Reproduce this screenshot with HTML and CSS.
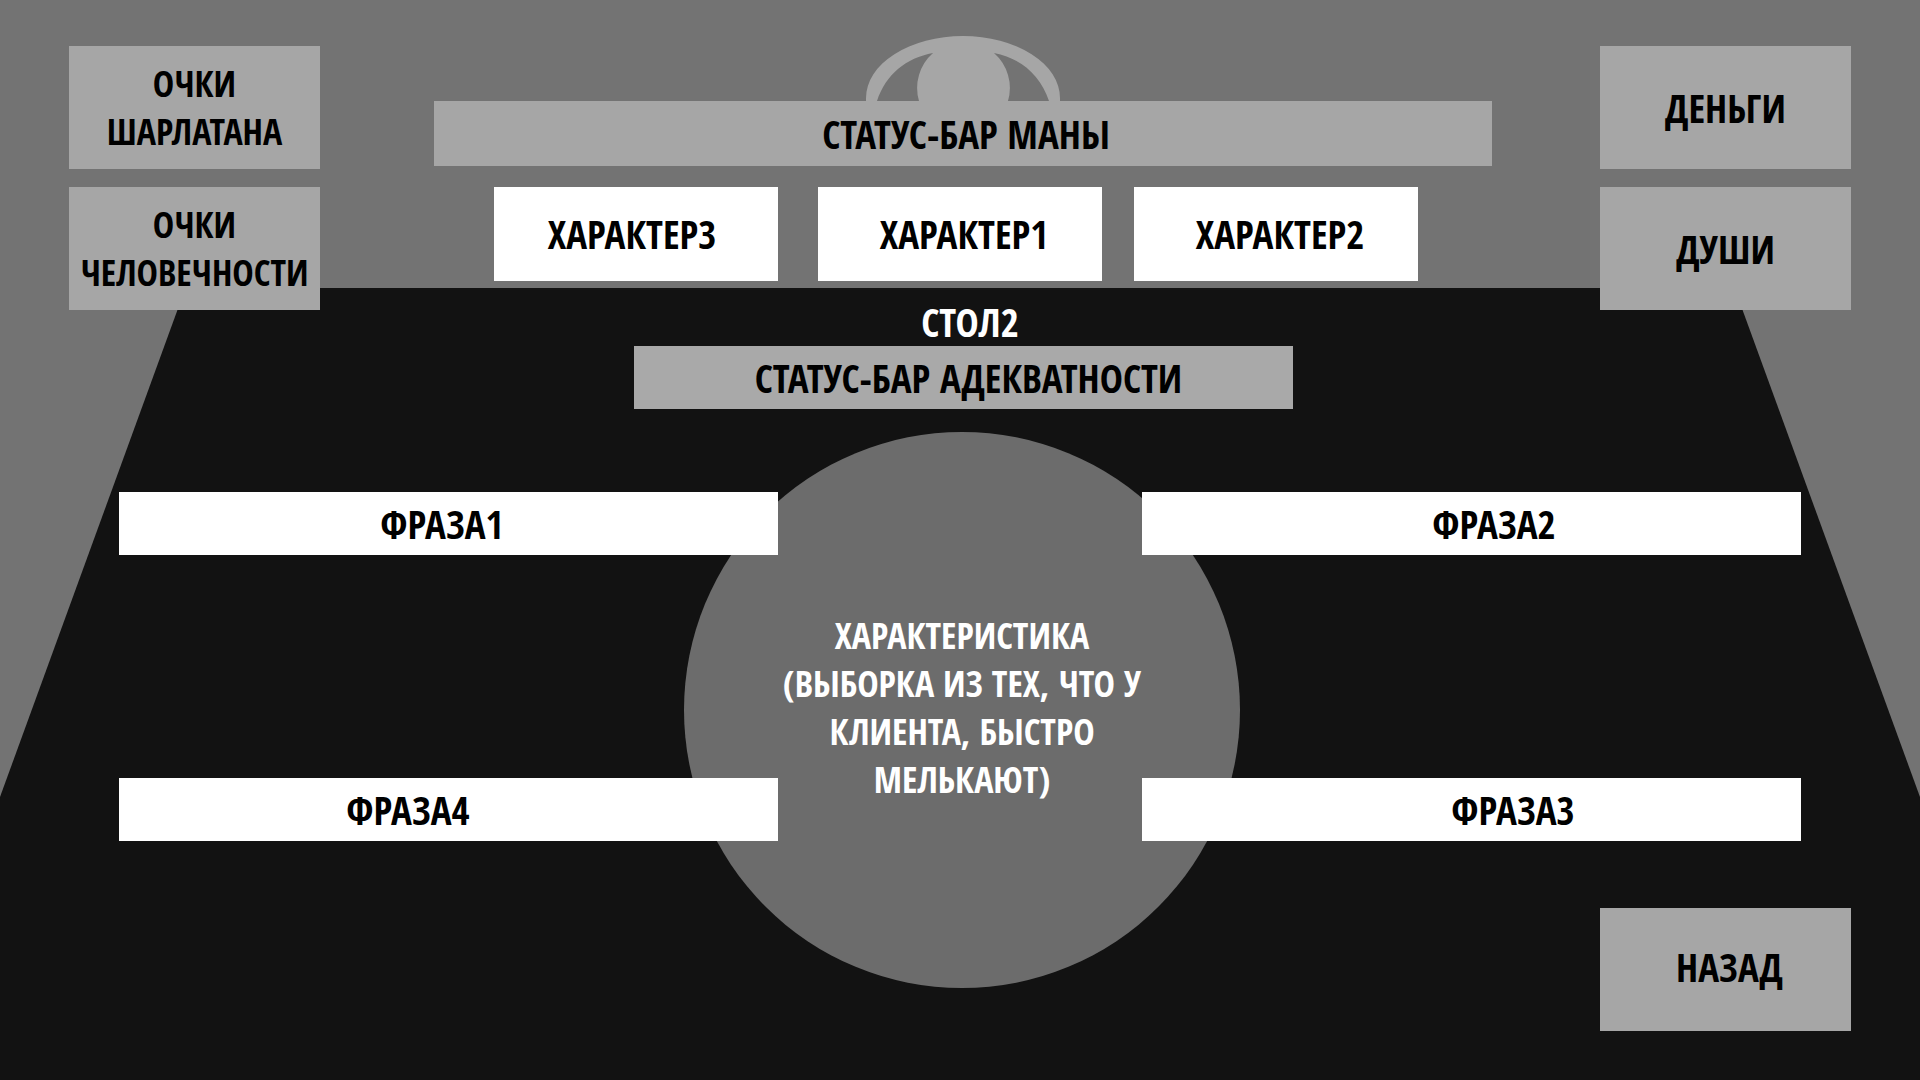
FILE: index.html
```html
<!DOCTYPE html>
<html lang="ru">
<head>
  <meta charset="utf-8">
  <meta name="viewport" content="width=device-width, initial-scale=1">
  <title>Стол</title>
  <link rel="stylesheet" href="styles.css">
</head>
<body>
  <main class="scene">
    <header class="hud">
      <div class="counters">
        <div class="counter counter-long">Очки<br>шарлатана</div>
        <div class="counter counter-long">Очки<br>человечности</div>
      </div>

      <div class="client">
        <svg class="eye" viewBox="0 0 194 65" width="194" height="65" aria-hidden="true">
          <path d="M0 65 V62 A97 62 0 0 1 194 62 V65 H183 C174 38 154 22 128 17 A46.500 46.500 0 0 1 142 65 H53 A46.500 46.500 0 0 1 67 17 C40 22 20 38 11 65 Z"/>
        </svg>
        <div class="bar mana">Статус-бар маны</div>
        <div class="traits">
          <div class="trait trait-left">Характер3</div>
          <div class="trait trait-middle">Характер1</div>
          <div class="trait trait-right">Характер2</div>
        </div>
      </div>

      <div class="counters">
        <div class="counter">Деньги</div>
        <div class="counter">Души</div>
      </div>
    </header>

    <section class="table">
      <div class="table-head">
        <h1 class="table-title">Стол2</h1>
        <div class="bar sanity">Статус-бар адекватности</div>
      </div>
      <div class="board">
        <p class="feature">Характеристика<br>(выборка из тех, что у<br>клиента, быстро<br>мелькают)</p>
        <button type="button" class="phrase phrase-1">Фраза1</button>
        <button type="button" class="phrase phrase-2">Фраза2</button>
        <button type="button" class="phrase phrase-3">Фраза3</button>
        <button type="button" class="phrase phrase-4">Фраза4</button>
        <button type="button" class="back">Назад</button>
      </div>
    </section>
  </main>
</body>
</html>
```
FILE: styles.css
```css
* {
  box-sizing: border-box;
}

body {
  margin: 0;
  background: #737373;
  color: #000;
  font-family: "Open Sans Condensed", "Open Sans", sans-serif;
  font-size: 39px;
  font-weight: 700;
  line-height: 48px;
  text-transform: uppercase;
}

button {
  border: 0;
  padding: 0;
  color: inherit;
  font: inherit;
  text-transform: inherit;
  cursor: pointer;
}

.scene {
  display: flex;
  flex-direction: column;
  min-height: 100vh;
}

/* Counters, mana and client traits */
.hud {
  position: relative;
  z-index: 1;
  display: grid;
  grid-template-columns: 251px 1fr 251px;
  padding: 36px 69px 0;
}

.counters {
  display: flex;
  flex-direction: column;
  gap: 18px;
  padding-top: 10px;
}

.counter {
  display: flex;
  align-items: center;
  justify-content: center;
  height: 123px;
  background: #a6a6a6;
  text-align: center;
}

.counter-long {
  font-size: 36px;
}

.client {
  display: flex;
  flex-direction: column;
  align-items: center;
  padding: 0 108px 0 114px;
}

.eye {
  display: block;
  fill: #a6a6a6;
}

.bar {
  display: flex;
  align-items: center;
  justify-content: center;
  background: #a6a6a6;
  white-space: nowrap;
}

.mana {
  width: 100%;
  height: 65px;
  padding-left: 6px;
}

.traits {
  display: grid;
  grid-template-columns: 284fr 40fr 284fr 32fr 284fr;
  width: 100%;
  padding: 21px 74px 0 60px;
}

.trait {
  display: flex;
  align-items: center;
  justify-content: center;
  height: 94px;
  background: #fff;
}

.trait-left {
  grid-column: 1;
  padding-right: 8px;
}

.trait-middle {
  grid-column: 3;
  padding-left: 8px;
}

.trait-right {
  grid-column: 5;
  padding-left: 8px;
}

/* The table top narrows towards the client, under the counters */
.table {
  flex: 1;
  margin-top: -22px;
  padding: 9px 0 49px;
  background: #121212;
  clip-path: polygon(9.66% 0, 90.34% 0, 100% 509px, 100% 100%, 0 100%, 0 509px);
}

.table-head {
  padding-left: 7px;
}

.table-title {
  margin: 0;
  padding-left: 13px;
  color: #fff;
  font-size: 39px;
  line-height: 49px;
  text-align: center;
}

.sanity {
  width: 34.45%;
  height: 63px;
  margin: 0 auto;
  padding-left: 10px;
  background: #a9a9a9;
}

.board {
  display: grid;
  grid-template-columns: 50fr 659fr 364fr 659fr 50fr;
  grid-template-rows: 83px 63px 223px 63px 67px 80px 43px;
  padding: 0 69px;
}

.feature {
  grid-area: 1 / 1 / 7 / 6;
  place-self: end center;
  display: flex;
  align-items: center;
  justify-content: center;
  width: 556px;
  height: 556px;
  margin: 0 0 0 4px;
  padding-bottom: 4px;
  border-radius: 50%;
  background: #6c6c6c;
  color: #fff;
  font-size: 36px;
  text-align: center;
  white-space: nowrap;
}

.phrase {
  background: #fff;
}

.phrase-1 {
  grid-area: 2 / 2;
  padding-right: 13px;
}

.phrase-2 {
  grid-area: 2 / 4;
  padding-left: 45px;
}

.phrase-3 {
  grid-area: 4 / 4;
  padding-left: 83px;
}

.phrase-4 {
  grid-area: 4 / 2;
  padding-right: 81px;
}

.back {
  grid-area: 6 / 4 / 8 / 6;
  justify-self: end;
  width: 251px;
  padding: 0 0 6px 8px;
  background: #a6a6a6;
}
```
